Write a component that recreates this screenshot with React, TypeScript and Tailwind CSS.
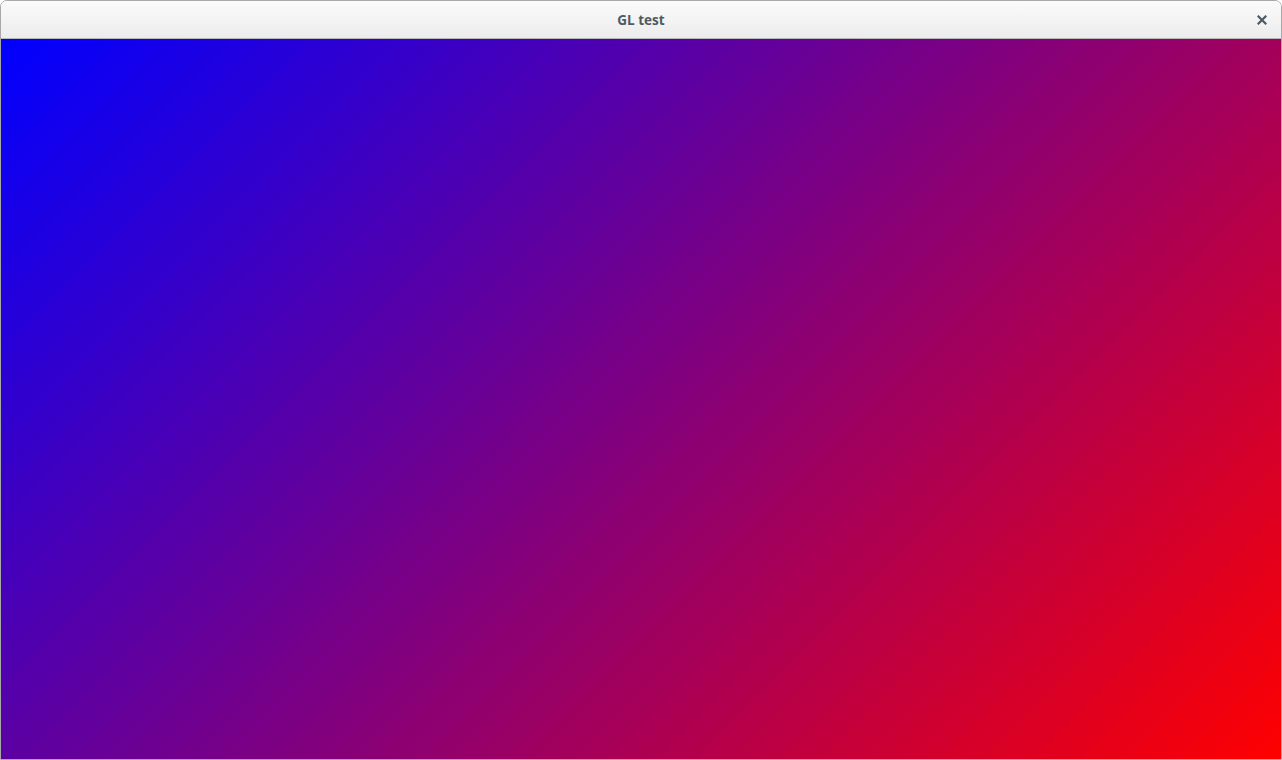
const App = () => {
  return (
    <div className="w-[1282px] h-[760px] bg-white">
      <div className="flex flex-col w-full h-full border border-[#a8a8a8] rounded-t-[7px] overflow-hidden">
        <header className="relative flex items-center justify-center h-[38px] pt-[1px] shrink-0 bg-gradient-to-b from-[#fbfbfb] to-[#ececec] border-b border-[#b8b8b8]">
          <span className="text-[13.5px] font-bold text-[#4d5a63]" style={{ fontFamily: '"Open Sans", "Noto Sans", sans-serif' }}>
            GL test
          </span>
          <button className="absolute right-[14px] top-[14px] w-[10px] h-[10px] flex items-center justify-center">
            <svg width="10" height="10" viewBox="0 0 10 10">
              <path d="M1.5 1.5 L8.5 8.5 M8.5 1.5 L1.5 8.5" stroke="#4d5a63" strokeWidth="2.2" strokeLinecap="square" />
            </svg>
          </button>
        </header>
        <main className="flex-1 bg-[linear-gradient(135deg,#0000ff,#ff0000)]" />
      </div>
    </div>
  );
};

export default App;
